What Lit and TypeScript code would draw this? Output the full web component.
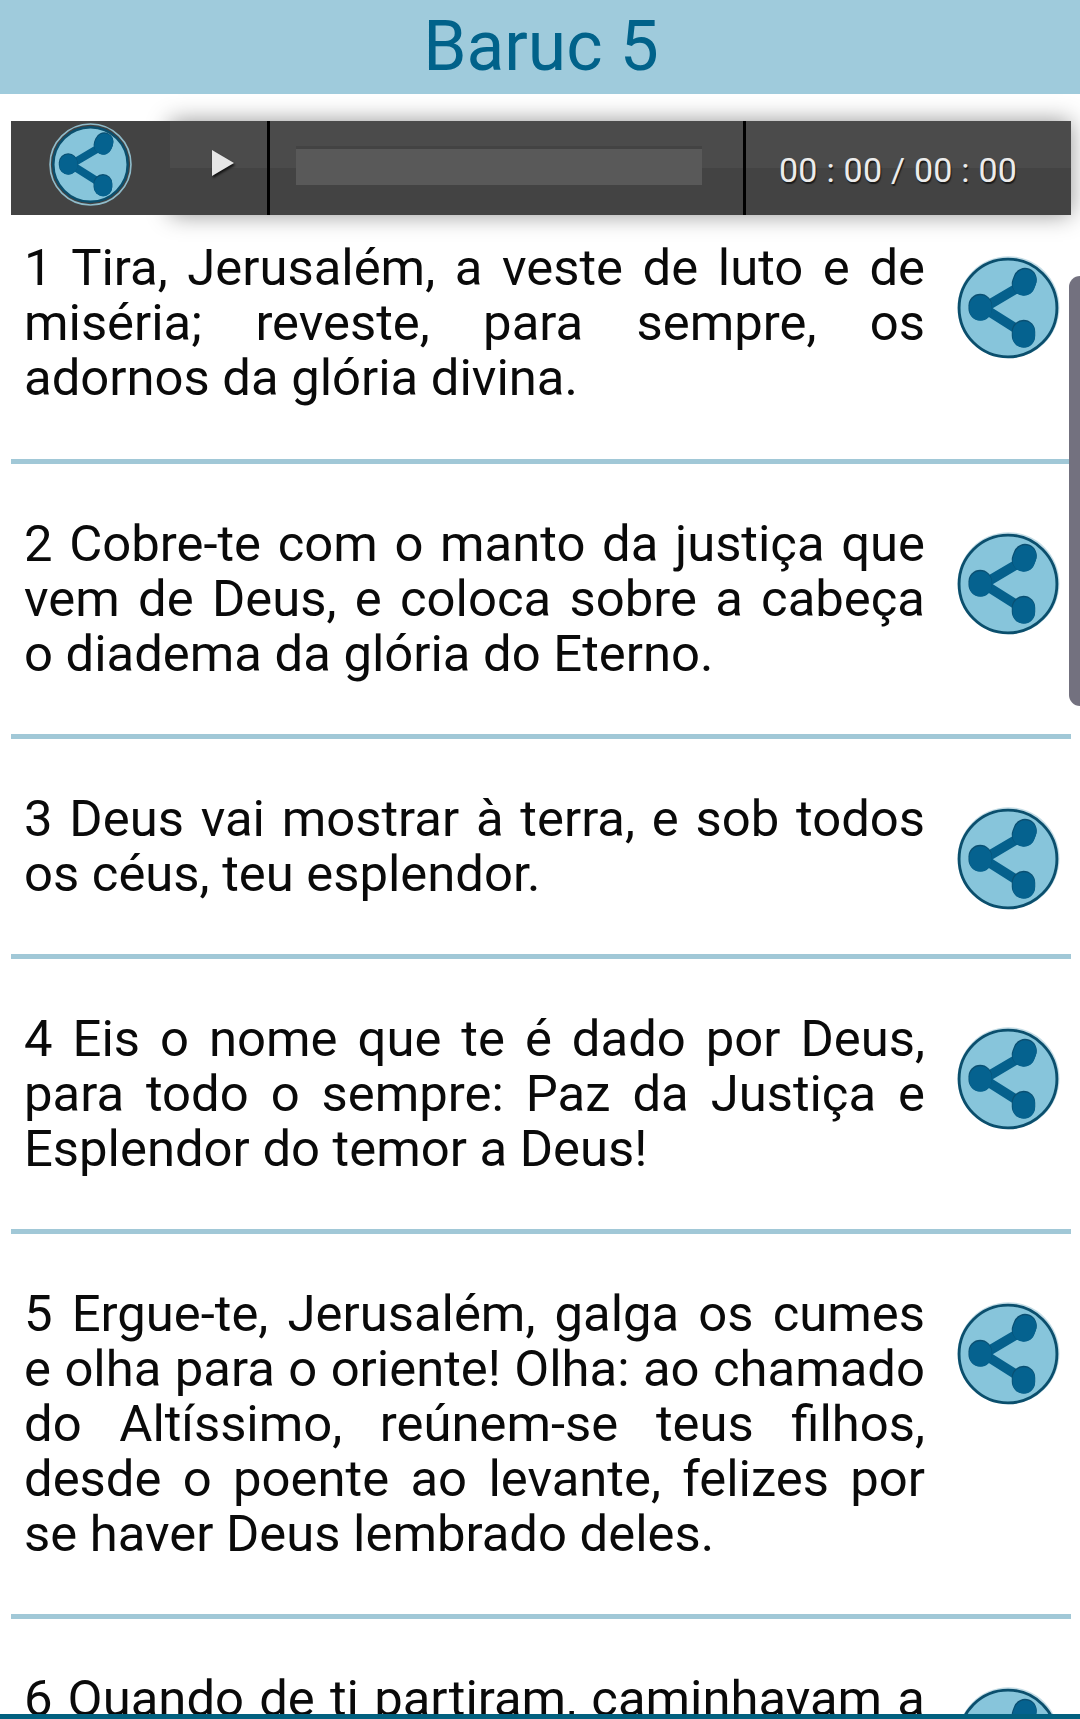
import { LitElement, html, css, svg } from "lit";
import { customElement } from "lit/decorators.js";

const verses = [
  "1 Tira, Jerusalém, a veste de luto e de miséria; reveste, para sempre, os adornos da glória divina.",
  "2 Cobre-te com o manto da justiça que vem de Deus, e coloca sobre a cabeça o diadema da glória do Eterno.",
  "3 Deus vai mostrar à terra, e sob todos os céus, teu esplendor.",
  "4 Eis o nome que te é dado por Deus, para todo o sempre: Paz da Justiça e Esplendor do temor a Deus!",
  "5 Ergue-te, Jerusalém, galga os cumes e olha para o oriente! Olha: ao chamado do Altíssimo, reúnem-se teus filhos, desde o poente ao levante, felizes por se haver Deus lembrado deles.",
  "6 Quando de ti partiram, caminhavam a pé, levados pelos inimigos; Deus, porém, os reconduz a ti.",
];

const shareIcon = (small: boolean) => svg`
  <svg class="share" viewBox="-52 -52 104 104" aria-hidden="true">
    ${small
      ? svg`<circle r="49.5" fill="none" stroke="#8fbccb" stroke-width="2"/>`
      : svg`<circle r="50" fill="#6fa9c0" opacity=".4" transform="translate(.5 -.8)"/>`}
    <circle r="${small ? 45.5 : 48}" fill="#87c5db" stroke="#0b4f6d" stroke-width="${small ? 3 : 2.8}"/>
    <path d="M15 -23 L-24 0 L14 24" fill="none" stroke="#05608c" stroke-width="9.5"/>
    <g fill="none" stroke="#0a4f72" stroke-width="23" stroke-linecap="round" transform="translate(-.3 -.9)">
      <path d="M17 -27 L15.5 -23"/><path d="M-27 -1.5 L-27 1.5"/><path d="M15.5 24 L15.5 28"/>
    </g>
    <g fill="none" stroke="#05628f" stroke-width="22" stroke-linecap="round">
      <path d="M17 -27 L15.5 -23"/><path d="M-27 -1.5 L-27 1.5"/><path d="M15.5 24 L15.5 28"/>
    </g>
  </svg>`;

@customElement("app-root")
export class AppRoot extends LitElement {
  static styles = css`
    :host {
      display: block;
      position: relative;
      height: 1719px;
      overflow: hidden;
      background: #fff;
      font-family: Roboto, "Liberation Sans", sans-serif;
      color: #0a0a0a;
    }
    .title {
      height: 94px;
      margin: 0;
      padding-left: 2px;
      box-sizing: border-box;
      background: #9fcbdc;
      color: #01628a;
      font-size: 69.5px;
      font-weight: 400;
      line-height: 94px;
      text-align: center;
    }
    .player {
      display: flex;
      height: 94px;
      margin: 27px 9px 0 11px;
    }
    .player-share {
      flex: 0 0 159px;
      display: flex;
      align-items: center;
      justify-content: center;
      box-sizing: border-box;
      padding: 0 0 8px 0;
      background: #434343;
      position: relative;
      z-index: 1;
    }
    .player-share .share {
      width: 85px;
      height: 85px;
    }
    .controls {
      flex: 1;
      display: flex;
      background: linear-gradient(#4b4b4b 0 50%, #434343 50% 100%);
      box-shadow: 0 0 22px rgba(0, 0, 0, 0.42);
    }
    .play {
      flex: 0 0 97px;
      display: flex;
      align-items: center;
      justify-content: center;
      border-right: 3px solid #000;
    }
    .play i {
      display: block;
      width: 0;
      height: 0;
      margin-top: -10px;
      margin-left: 8px;
      border-left: 22px solid #e6e6e6;
      border-top: 13px solid transparent;
      border-bottom: 13px solid transparent;
      filter: drop-shadow(1px 2px 1px #111);
    }
    .seek {
      flex: 0 0 476px;
      box-sizing: border-box;
      padding: 25px 41px 30px 26px;
      border-right: 3px solid #000;
    }
    .seek div {
      height: 39px;
      box-sizing: border-box;
      background: #595959;
      border-top: 3px solid #434343;
    }
    .time {
      flex: 1;
      padding: 5px 0 0 33px;
      color: #ececec;
      font-size: 34px;
      letter-spacing: 0.25px;
      line-height: 89px;
      white-space: nowrap;
      text-shadow: 1px 2px 1px #1c1c1c;
    }
    .row {
      display: flex;
      align-items: flex-start;
      margin: 0 9px 0 11px;
      padding: 25px 0 54px;
      border-bottom: 5px solid #a1c8d7;
    }
    .row + .row {
      padding-top: 52px;
      padding-bottom: 53px;
    }
    .row:last-child {
      border-bottom: 0;
    }
    .text {
      flex: 0 0 901px;
      margin: 0 0 0 13px;
      font-size: 50.8px;
      line-height: 55px;
      text-align: justify;
    }
    .row .share {
      flex: none;
      width: 106px;
      height: 106px;
      margin: 15px 0 -20px 30px;
    }
    .scrollbar {
      position: absolute;
      top: 276px;
      right: 0;
      width: 11px;
      height: 430px;
      background: #73717f;
      border-radius: 11px 0 0 11px;
    }
    .bottom {
      position: absolute;
      left: 0;
      right: 0;
      bottom: 0;
      height: 5px;
      background: #02607f;
    }
  `;

  render() {
    return html`
      <h1 class="title">Baruc 5</h1>
      <div class="player">
        <div class="player-share">${shareIcon(true)}</div>
        <div class="controls">
          <div class="play"><i></i></div>
          <div class="seek"><div></div></div>
          <div class="time">00 : 00 / 00 : 00</div>
        </div>
      </div>
      <div class="list">
        ${verses.map(
          (v) => html`<div class="row"><p class="text">${v}</p>${shareIcon(false)}</div>`
        )}
      </div>
      <div class="scrollbar"></div>
      <div class="bottom"></div>
    `;
  }
}
